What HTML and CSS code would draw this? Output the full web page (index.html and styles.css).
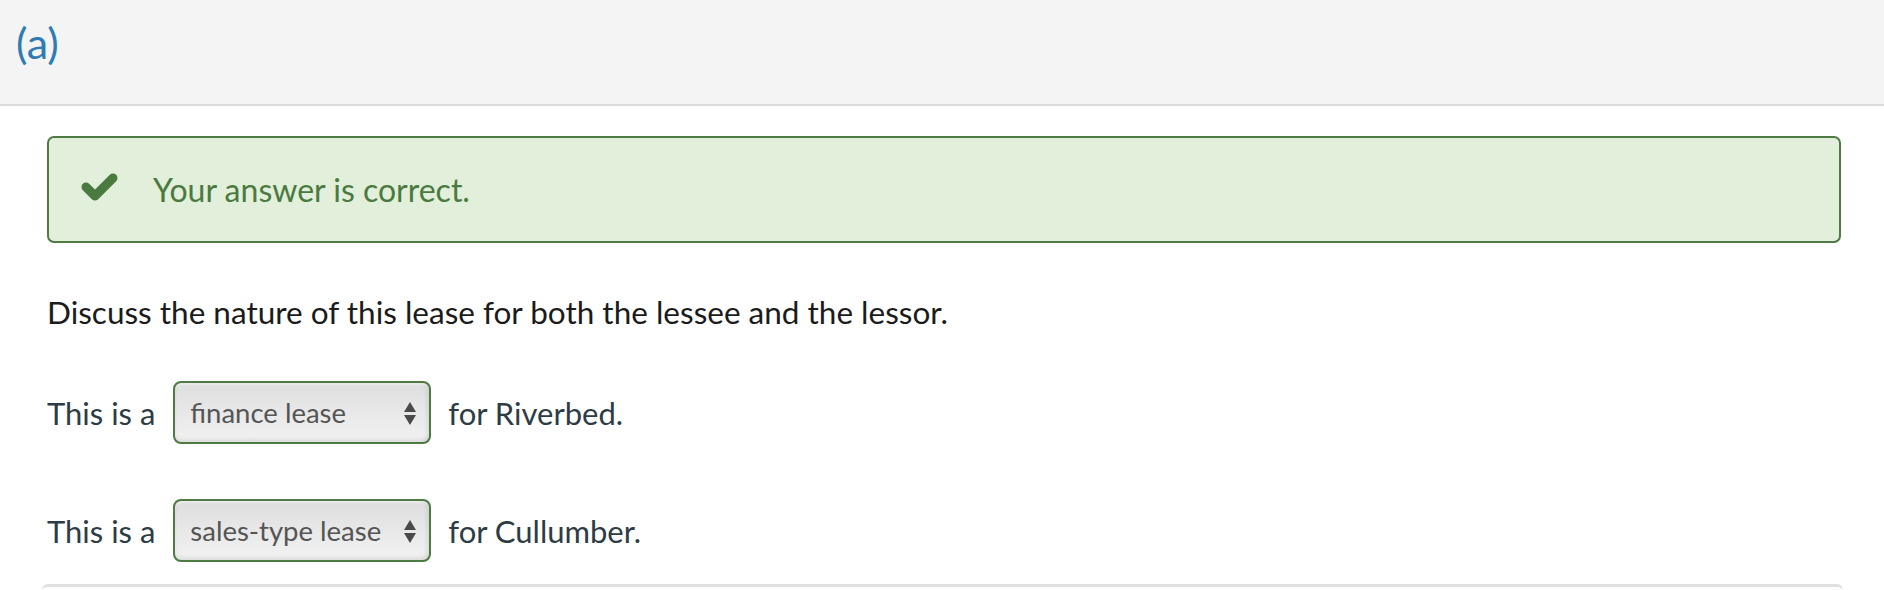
FILE: index.html
```html
<!DOCTYPE html>
<html>
<head>
<meta charset="utf-8">
<link rel="stylesheet" href="styles.css">
</head>
<body>
<div class="header"><span class="part">(a)</span></div>
<div class="content">
  <div class="alert">
    <svg class="check" width="37" height="28" viewBox="0 0 37 28"><polyline points="5,14 14,23 32,5" fill="none" stroke="#4a7a40" stroke-width="9" stroke-linecap="round" stroke-linejoin="round"/></svg>
    <span class="alert-text">Your answer is correct.</span>
  </div>
  <p class="question">Discuss the nature of this lease for both the lessee and the lessor.</p>
  <div class="row">
    <span>This is a</span>
    <span class="select"><span class="sel-text">finance lease</span><span class="arrows"><i class="up"></i><i class="down"></i></span></span>
    <span>for Riverbed.</span>
  </div>
  <div class="row">
    <span>This is a</span>
    <span class="select"><span class="sel-text">sales-type lease</span><span class="arrows"><i class="up"></i><i class="down"></i></span></span>
    <span>for Cullumber.</span>
  </div>
  <div class="next"></div>
</div>
</body>
</html>
```
FILE: styles.css
```css
html, body { margin: 0; padding: 0; background: #fff; }
body { font-family: Lato, "Liberation Sans", sans-serif; width: 1884px; height: 590px; overflow: hidden; }
.header { height: 104px; background: #f4f4f4; border-bottom: 2px solid #dcdcdc; display: flex; align-items: flex-start; }
.part { color: #2f7bb3; font-size: 43px; margin: 17px 0 0 16px; line-height: 52px; }
.content { padding: 0 43px 0 47px; }
.alert { margin-top: 30px; height: 107px; box-sizing: border-box; border: 2px solid #4e7a44; border-radius: 7px; background: #e2efda; display: flex; align-items: center; padding-left: 32px; }
.check { margin-top: -6px; }
.alert-text { color: #4a7a40; font-size: 32px; margin-left: 35px; }
.question { margin: 0; margin-top: 50px; font-size: 31.5px; color: #1b1b1b; line-height: 38px; }
.row { display: flex; align-items: center; font-size: 31px; color: #2d3b45; margin-top: 50px; }
.row + .row { margin-top: 55px; }
.select { margin: 0 17px 0 18px; width: 258px; height: 63px; box-sizing: border-box; border: 2px solid #4e7a44; border-radius: 8px; background: linear-gradient(#dedede, #f2f2f2); box-shadow: inset 0 -3px 4px rgba(0,0,0,0.07), inset -3px 0 4px rgba(0,0,0,0.05), inset 0 2px 2px rgba(255,255,255,0.5); display: flex; align-items: center; padding: 0 13px 0 15px; }
.sel-text { flex: 1; font-size: 27.5px; color: #555; white-space: nowrap; }
.arrows { display: flex; flex-direction: column; gap: 3px; align-items: center; margin-top: 2px; }
.arrows i { width: 0; height: 0; border-left: 6px solid transparent; border-right: 6px solid transparent; }
.arrows .up { border-bottom: 10px solid #4a4a4a; }
.arrows .down { border-top: 10px solid #4a4a4a; }
.next { margin-top: 22px; height: 10px; border-top: 3px solid #e0e0e0; border-radius: 6px 6px 0 0; margin-left: -5px; margin-right: -2px; }
```
